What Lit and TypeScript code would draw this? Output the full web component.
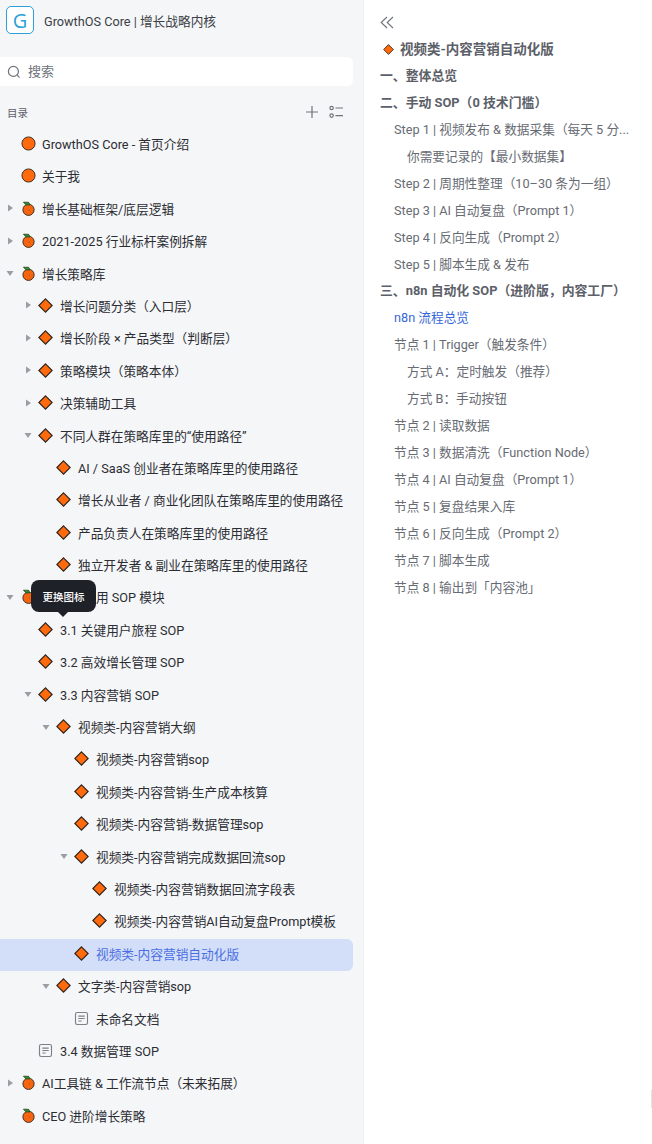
import { LitElement, html, css, nothing } from "lit";
import { customElement } from "lit/decorators.js";

type Row = [number, string, string, string?, boolean?];
const rows: Row[] = [
  [0, "circle", "GrowthOS Core - 首页介绍"],
  [0, "circle", "关于我"],
  [0, "orange", "增长基础框架/底层逻辑", "r"],
  [0, "orange", "2021-2025 行业标杆案例拆解", "r"],
  [0, "orange", "增长策略库", "d"],
  [1, "diamond", "增长问题分类（入口层）", "r"],
  [1, "diamond", "增长阶段 × 产品类型（判断层）", "r"],
  [1, "diamond", "策略模块（策略本体）", "r"],
  [1, "diamond", "决策辅助工具", "r"],
  [1, "diamond", "不同人群在策略库里的“使用路径”", "d"],
  [2, "diamond", "AI / SaaS 创业者在策略库里的使用路径"],
  [2, "diamond", "增长从业者 / 商业化团队在策略库里的使用路径"],
  [2, "diamond", "产品负责人在策略库里的使用路径"],
  [2, "diamond", "独立开发者 & 副业在策略库里的使用路径"],
  [0, "orange", "用 SOP 模块", "d"],
  [1, "diamond", "3.1 关键用户旅程 SOP"],
  [1, "diamond", "3.2 高效增长管理 SOP"],
  [1, "diamond", "3.3 内容营销 SOP", "d"],
  [2, "diamond", "视频类-内容营销大纲", "d"],
  [3, "diamond", "视频类-内容营销sop"],
  [3, "diamond", "视频类-内容营销-生产成本核算"],
  [3, "diamond", "视频类-内容营销-数据管理sop"],
  [3, "diamond", "视频类-内容营销完成数据回流sop", "d"],
  [4, "diamond", "视频类-内容营销数据回流字段表"],
  [4, "diamond", "视频类-内容营销AI自动复盘Prompt模板"],
  [3, "diamond", "视频类-内容营销自动化版", undefined, true],
  [2, "diamond", "文字类-内容营销sop", "d"],
  [3, "doc", "未命名文档"],
  [1, "doc", "3.4 数据管理 SOP"],
  [0, "orange", "AI工具链 & 工作流节点（未来拓展）", "r"],
  [0, "orange", "CEO 进阶增长策略"],
];

const outline: [string, string, boolean?][] = [
  ["h", "一、整体总览"],
  ["h", "二、手动 SOP（0 技术门槛）"],
  ["s", "Step 1 | 视频发布 & 数据采集（每天 5 分..."],
  ["t", "你需要记录的【最小数据集】"],
  ["s", "Step 2 | 周期性整理（10–30 条为一组）"],
  ["s", "Step 3 | AI 自动复盘（Prompt 1）"],
  ["s", "Step 4 | 反向生成（Prompt 2）"],
  ["s", "Step 5 | 脚本生成 & 发布"],
  ["h", "三、n8n 自动化 SOP（进阶版，内容工厂）"],
  ["s", "n8n 流程总览", true],
  ["s", "节点 1 | Trigger（触发条件）"],
  ["t", "方式 A：定时触发（推荐）"],
  ["t", "方式 B：手动按钮"],
  ["s", "节点 2 | 读取数据"],
  ["s", "节点 3 | 数据清洗（Function Node）"],
  ["s", "节点 4 | AI 自动复盘（Prompt 1）"],
  ["s", "节点 5 | 复盘结果入库"],
  ["s", "节点 6 | 反向生成（Prompt 2）"],
  ["s", "节点 7 | 脚本生成"],
  ["s", "节点 8 | 输出到「内容池」"],
];

const icon = (k: string) => {
  if (k === "circle")
    return html`<svg class="ic" viewBox="0 0 16 16"><circle cx="8" cy="8" r="7" fill="#ff6a0c" stroke="#3a2a20" stroke-width="1"/></svg>`;
  if (k === "orange")
    return html`<svg class="ic" viewBox="0 0 16 16"><circle cx="8" cy="9.4" r="6" fill="#f5650f" stroke="#3a2a20" stroke-width="1"/><path d="M2.6 1.2 L8.2 1.4 L9.6 4.2 L5.4 4.2 Z" fill="#2f8f2a" stroke="#23401c" stroke-width=".8"/><circle cx="9" cy="9.8" r=".7" fill="#c94f08"/></svg>`;
  if (k === "diamond")
    return html`<svg class="ic" viewBox="0 0 16 16"><path d="M8 .9 L15.1 8 L8 15.1 L.9 8 Z" fill="#ff6a0c" stroke="#2c2420" stroke-width="1.2"/></svg>`;
  return html`<svg class="ic" viewBox="0 0 16 16" fill="none" stroke="#7d8087" stroke-width="1.2"><rect x="1.6" y="1.6" width="12.8" height="12.8" rx="1.8"/><path d="M4.6 5.4h6.8M4.6 8h6.8M4.6 10.6h3.6"/></svg>`;
};

@customElement("app-root")
export class AppRoot extends LitElement {
  static styles = css`
    :host {
      display: block;
      width: 652px;
      height: 1144px;
      overflow: hidden;
      background: #fff;
      font-family: Roboto, "Noto Sans CJK SC", sans-serif;
      font-size: 12.7px;
      color: #262626;
    }
    .page { display: flex; height: 1144px; position: relative; }
    .side {
      flex: none; background: #f5f6f8;
      border-right: 1px solid #f0f1f3;
      padding-right: 10px; box-sizing: border-box; width: 364px;
    }
    .brand { display: flex; align-items: center; gap: 10px; height: 40px; padding: 0 0 0 6px; }
    .logo {
      width: 28px; height: 28px; box-sizing: border-box; border: 1px solid #2a9fd8;
      border-radius: 5px; background: #fff; color: #2a9fd8; font-size: 20px;
      display: flex; align-items: center; justify-content: center; font-family: "Open Sans", sans-serif;
    }
    .brand-name { color: #3b3f46; }
    .search {
      margin-top: 17px; height: 29px; box-sizing: border-box; padding: 0 0 2px 7px; background: #fff; border-radius: 0 6px 6px 0;
      display: flex; align-items: center; gap: 7px; color: #6f737a; font-size: 13px;
    }
    .search svg { margin-top: 2px; }
    .toc { display: flex; align-items: center; justify-content: space-between; height: 20px; margin-top: 16px; padding: 0 10px 0 7px; font-size: 10.5px; color: #5c6068; }
    .toc-ic { display: flex; gap: 10px; align-items: center; }
    .tree { margin-top: 7px; display: flex; flex-direction: column; gap: 0.4px; }
    .row { height: 32px; box-sizing: border-box; padding-bottom: 3px; display: flex; align-items: center; position: relative; white-space: nowrap; color: #2b2d33; border-radius: 0 6px 6px 0; }
    .row.on { background: #d3def8; color: #4a6fe3; }
    .caret { width: 16px; height: 16px; flex: none; display: flex; align-items: center; justify-content: center; }
    .ic { width: 15px; height: 15px; flex: none; margin: 0 7.5px 0 1.5px; }
    .l0 { padding-left: 2px; } .l1 { padding-left: 20px; } .l2 { padding-left: 38px; } .l3 { padding-left: 56px; } .l4 { padding-left: 74px; }
    .l0 .ic { margin: 0 6.5px 0 2.5px; }
    .covered { margin-left: 54px; }
    .tip {
      position: absolute; left: 31px; top: -2px; height: 32px; width: 65px; background: #1f2129;
      border-radius: 8px; color: #fff; font-size: 10.5px; font-weight: 500; display: flex; align-items: center; justify-content: center; z-index: 3;
    }
    .tip::after {
      content: ""; position: absolute; left: 27px; bottom: -5px; border: 5px solid transparent; border-bottom: 0; border-top-color: #1f2129;
    }
    .main { flex: 1; padding: 15px 0 0 16px; min-width: 0; }
    .collapse { display: block; height: 16px; margin-bottom: 5px; }
    .out { display: flex; flex-direction: column; width: 272px; }
    .o { height: 26.95px; line-height: 26.95px; white-space: nowrap; color: #676b73; }
    .o.h { font-weight: 700; color: #5c6068; font-size: 12.85px; }
    .o.title { display: flex; align-items: center; gap: 6px; padding-left: 3px; font-size: 13.5px; }
    .o.s { padding-left: 14px; }
    .o.t { padding-left: 27px; }
    .o.blue { color: #3667d6; }
    .o .ic { width: 11px; height: 11px; margin: 0; }
    .scroll-mark { position: absolute; right: 0; top: 1090px; width: 1px; height: 18px; background: #e4e4e4; }
  `;

  render() {
    return html`<div class="page">
      <aside class="side">
        <div class="brand">
          <div class="logo">G</div>
          <div class="brand-name">GrowthOS Core | 增长战略内核</div>
        </div>
        <div class="search">
          <svg width="14" height="14" viewBox="0 0 14 14" fill="none" stroke="#6f737a" stroke-width="1.2"><circle cx="6.4" cy="6.4" r="5"/><path d="M10.2 10.2 12.6 12.6"/></svg>
          <span>搜索</span>
        </div>
        <div class="toc">
          <span>目录</span>
          <div class="toc-ic">
            <svg width="14" height="14" viewBox="0 0 14 14" stroke="#6f737a" stroke-width="1.2"><path d="M7 1v12M1 7h12"/></svg>
            <svg width="14" height="14" viewBox="0 0 14 14" fill="none" stroke="#6f737a" stroke-width="1.2"><circle cx="2.6" cy="3" r="1.7"/><circle cx="2.6" cy="10.6" r="1.7"/><path d="M6.4 3H14M6.4 10.6H14"/></svg>
          </div>
        </div>
        <div class="tree">
          ${rows.map(([l, k, t, c, on], i) => html`<div class="row l${l} ${on ? "on" : ""}">
            <span class="caret">${c === "r"
              ? html`<svg width="8" height="8" viewBox="0 0 8 8"><path d="M2 .5 7 4 2 7.5Z" fill="#9a9da3"/></svg>`
              : c === "d"
              ? html`<svg width="8" height="8" viewBox="0 0 8 8"><path d="M.5 2 7.5 2 4 7Z" fill="#9a9da3"/></svg>`
              : nothing}</span>
            ${icon(k)}
            <span class=${i === 14 ? "covered" : ""}>${t}</span>
            ${i === 14 ? html`<div class="tip">更换图标</div>` : nothing}
          </div>`)}
        </div>
      </aside>
      <main class="main">
        <svg class="collapse" width="16" height="16" viewBox="0 0 16 16" fill="none" stroke="#6f737a" stroke-width="1.1"><path d="M7 2 1.2 7.5 7 13M13 2 7.2 7.5 13 13"/></svg>
        <div class="out">
          <div class="o h title">${icon("diamond")}<span>视频类-内容营销自动化版</span></div>
          ${outline.map(([k, t, b]) => html`<div class="o ${k} ${b ? "blue" : ""}">${t}</div>`)}
        </div>
      </main>
      <div class="scroll-mark"></div>
    </div>`;
  }
}
